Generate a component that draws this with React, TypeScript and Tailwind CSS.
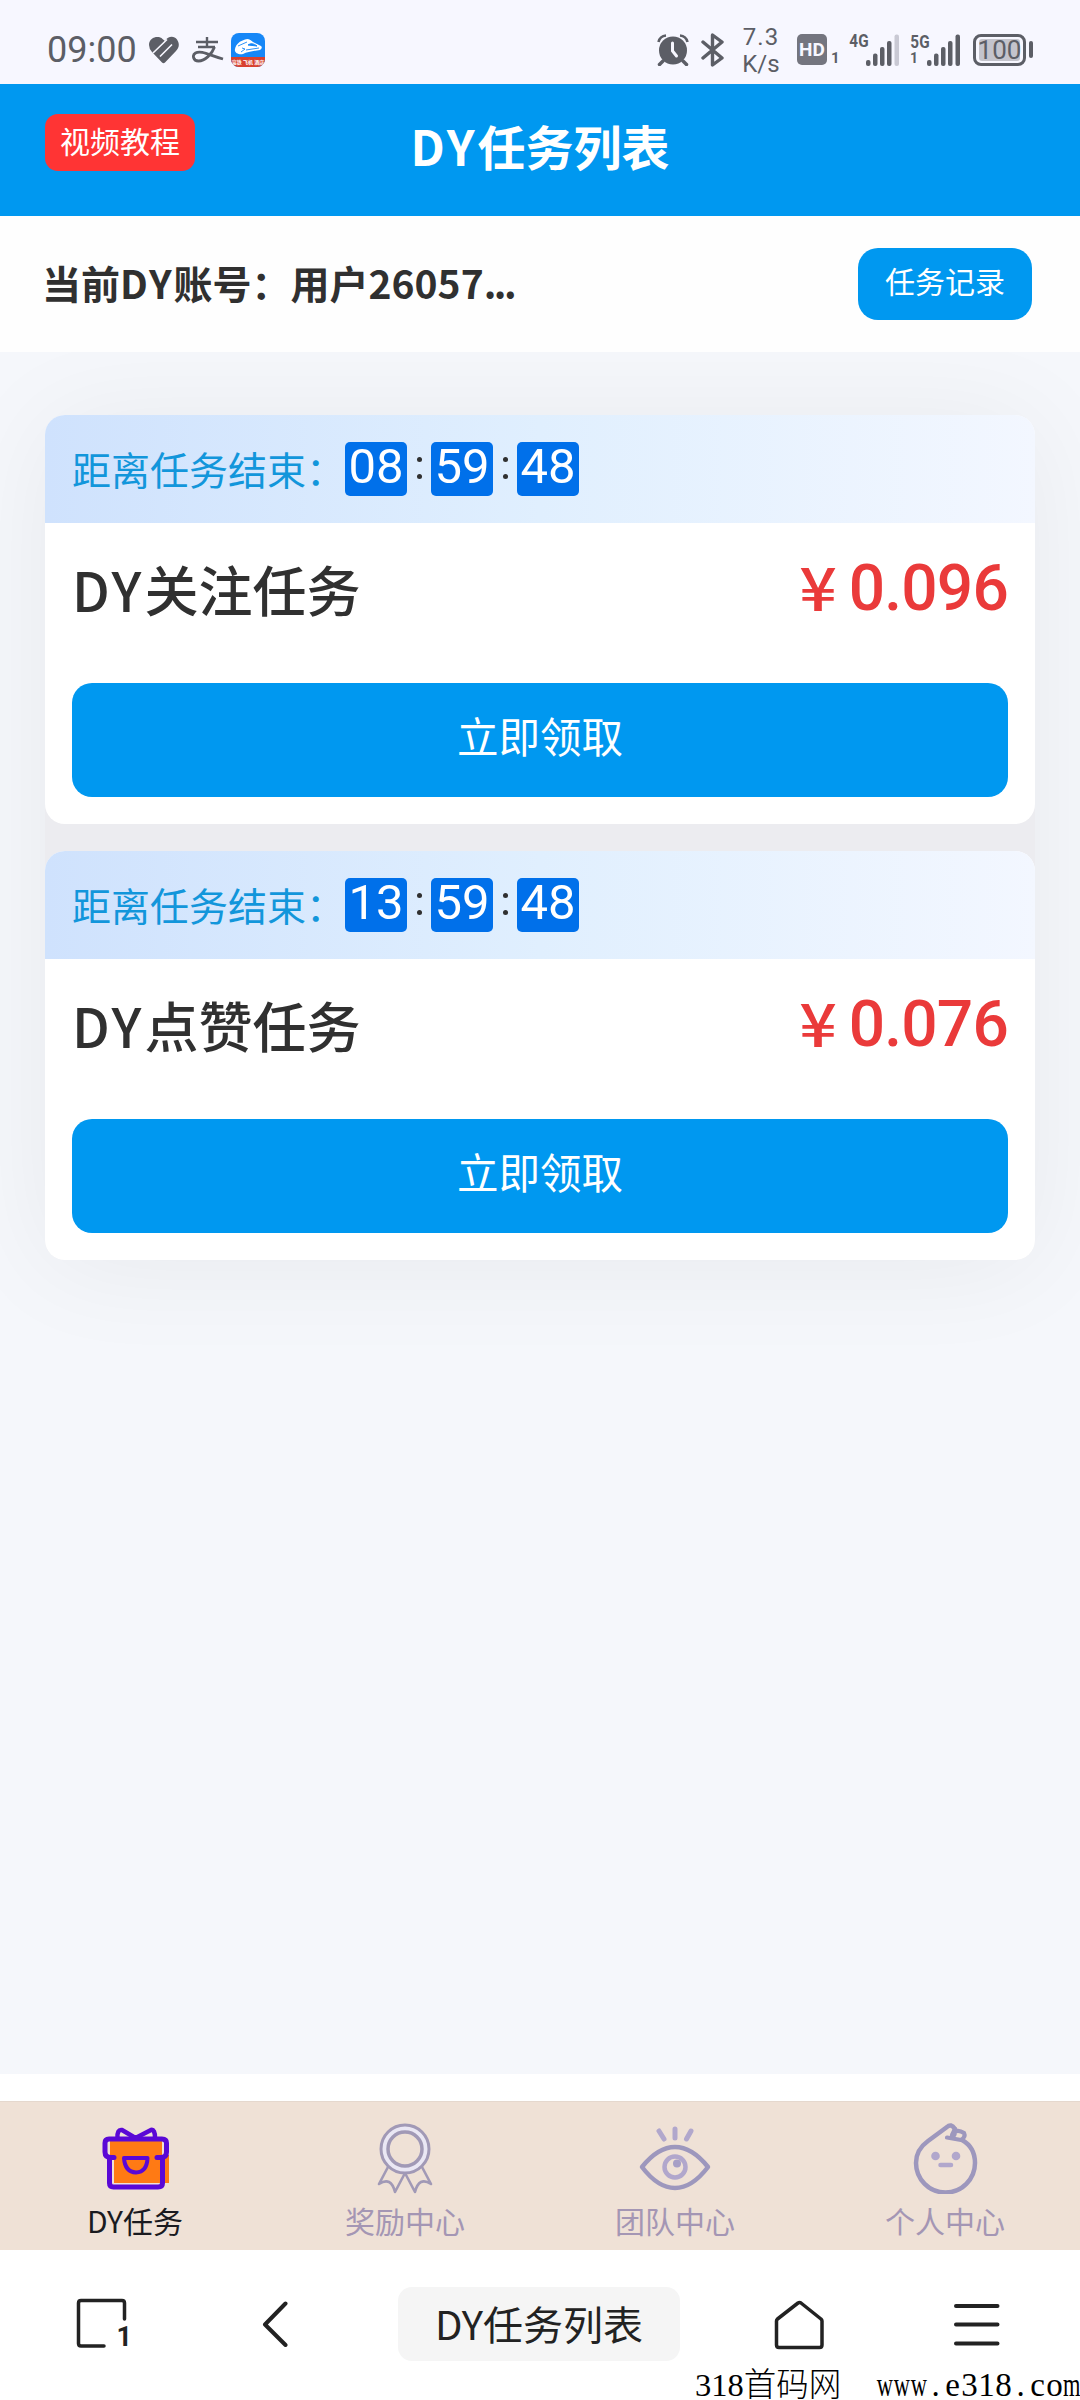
import type { ReactNode } from "react";

type Task = {
  title: string;
  price: string;
  countdown: [string, string, string];
};

const tasks: Task[] = [
  { title: "关注任务", price: "0.096", countdown: ["08", "59", "48"] },
  { title: "点赞任务", price: "0.076", countdown: ["13", "59", "48"] },
];

function HeartIcon() {
  return (
    <svg className="ml-[11px] h-[28px] w-[32px]" viewBox="0 0 32 28" fill="none">
      <path d="M1 9 C1 1 11 -1 14.500 3 L17 5 C20 0 26 -0.500 29 3.500 C32 8 31 12 28 15 L17 26.500 Q15.500 28 14 26.500 L4 16 Q1 12.500 1 9 Z" fill="#5c5e66" />
      <path d="M19 3.500 L5 17 M24 8.500 L12 20.500" stroke="#f7f7ff" strokeWidth="1.600" />
    </svg>
  );
}

function AlipayIcon() {
  return (
    <svg className="ml-[12px] h-[26px] w-[32px]" viewBox="0 0 32 26" fill="none" stroke="#5c5e66" strokeWidth="2.400">
      <path d="M4 5 H26 M15 0 V10 M6 10 H23" />
      <path d="M22.500 10 C20 17 13 24 6.500 24 C1 24 0 18 3.500 16 C9 13 17 18 31 22" strokeWidth="2.800" />
    </svg>
  );
}

function TrainIcon() {
  return (
    <span className="ml-[7px] flex h-[34px] w-[34px] flex-col overflow-hidden rounded-[8px] bg-[#1687f7]">
      <svg className="h-[24px] w-[34px]" viewBox="0 0 34 24" fill="none" stroke="#1687f7">
        <path d="M4 16 C5 11 9 8 14 6.500 C17 5 20 7 22 9 L30 13 Q32 15 29 17 C22 18 16 19 12 21 C8 22 3 20 4 16 Z" fill="#fff" stroke="none" />
        <path d="M17 12 Q21 9 26 13 Z" fill="#1687f7" />
        <path d="M11 15 L14 16 L10 19 M7 13 L16 9 M15 17 L28 15" strokeWidth="0.900" />
      </svg>
      <span className="flex h-[10px] items-center justify-center bg-[#d8412f] text-[5px] leading-none font-bold whitespace-nowrap text-white">
        高铁 飞机 酒店
      </span>
    </span>
  );
}

function AlarmIcon() {
  return (
    <svg className="h-[32px] w-[32px]" viewBox="0 0 32 32" fill="none" stroke="#5c5e66">
      <circle cx="16" cy="16.500" r="14" fill="#5c5e66" stroke="none" />
      <path d="M1.500 8 Q3 2 9 1.500 M23 1.500 Q29 2 30.500 8" strokeWidth="2.600" />
      <path d="M6 27 L2.500 30.500 M26 27 L29.500 30.500" strokeWidth="3.500" strokeLinecap="round" />
      <path d="M15.500 9 V17 L19.500 22" stroke="#f7f7ff" strokeWidth="3" strokeLinecap="round" />
    </svg>
  );
}

function BluetoothIcon() {
  return (
    <svg className="ml-[12px] h-[34px] w-[23px]" viewBox="0 0 23 34" fill="none" stroke="#5c5e66" strokeWidth="3.400" strokeLinejoin="round" strokeLinecap="round">
      <path d="M2 9 L21 25 L11.500 32 V2 L21 9 L2 25" />
    </svg>
  );
}

function SignalBars({ weak }: { weak?: boolean }) {
  return (
    <svg className="h-[32px] w-[34px]" viewBox="0 0 34 32" fill="#5c5e66">
      <rect x="0" y="26" width="4.500" height="6" rx="2" />
      <rect x="7" y="19.500" width="4.500" height="12.500" rx="2" />
      <rect x="14" y="13" width="4.500" height="19" rx="2" />
      <rect x="21" y="7" width="4.500" height="25" rx="2" />
      <rect x="28.500" y="0.500" width="4.500" height="31.500" rx="2" fill={weak ? "#c9c9d4" : "#5c5e66"} />
    </svg>
  );
}

function StatusBar() {
  return (
    <div className="flex h-[84px] items-start bg-[#f7f7ff] font-['Roboto','Noto_Sans_CJK_SC',sans-serif] text-[#5c5e66]">
      <div className="box-content flex h-[34px] w-[657px] shrink-0 items-center pt-[33px]">
        <span className="ml-[47px] w-[90px] text-[36px] leading-[34px]">09:00</span>
        <HeartIcon />
        <AlipayIcon />
        <TrainIcon />
      </div>
      <div className="box-content flex h-[33px] items-center pt-[33px]">
        <AlarmIcon />
        <BluetoothIcon />
        <span className="ml-[17px] flex w-[40px] flex-col items-center pt-[2px] text-[24px] leading-[27px]">
          <span className="tracking-[1px]">7.3</span>
          <span>K/s</span>
        </span>
        <span className="ml-[16px] flex h-[31px] w-[30px] items-center justify-center rounded-[5px] bg-[#74757f] text-[19px] leading-none font-bold text-[#f7f7ff]">
          HD
        </span>
        <span className="mt-[18px] ml-[4px] w-[8px] text-[15px] leading-none font-bold">1</span>
        <span className="mb-[17px] ml-[9px] w-[18px] scale-x-[0.85] text-[18px] leading-none font-bold">4G</span>
        <SignalBars weak />
        <span className="ml-[10px] flex w-[17px] flex-col text-[18px] leading-[17px] font-bold">
          <span className="-ml-[1px] scale-x-[0.85]">5G</span>
          <span className="text-[14px]">1</span>
        </span>
        <SignalBars />
        <span className="ml-[12px] flex h-[32px] w-[53px] items-center justify-center rounded-[8px] border-[3px] border-[#5c5e66]">
          <span className="flex h-[22px] w-[41px] items-center justify-center rounded-[3px] bg-[#c4c4cc] text-[26px] leading-none">
            100
          </span>
        </span>
        <span className="ml-[3px] h-[17px] w-[4px] rounded-[2px] bg-[#5c5e66]" />
      </div>
    </div>
  );
}

function TaskCard({ task }: { task: Task }) {
  const [hours, minutes, seconds] = task.countdown;
  return (
    <section className="h-[409px] overflow-hidden rounded-[20px] bg-white">
      <div className="flex h-[108px] items-center bg-linear-to-r from-[#cfe2fd] via-[#e0effe] to-[#f3f7ff] pl-[27px]">
        <span className="w-[273px] pb-[2px] text-[39px] leading-none text-[#1296db]">距离任务结束：</span>
        <TimeBox value={hours} />
        <Colon />
        <TimeBox value={minutes} />
        <Colon />
        <TimeBox value={seconds} />
      </div>
      <div className="flex h-[160px] items-start justify-between px-[27px] pt-[26px]">
        <h2 className="text-[54px] leading-[80px] font-medium text-[#303030]">
          <span className="tracking-[3px]">DY</span>
          {task.title}
        </h2>
        <div className="flex text-[60px] leading-[72px] font-medium text-[#ea3a3a]">
          <span className="mr-[14px] origin-center scale-x-[1.1]">¥</span>
          <span className="font-['Roboto',sans-serif] text-[64px] leading-[80px] tracking-[-0.800px]">
            {task.price}
          </span>
        </div>
      </div>
      <button
        type="button"
        className="mx-[27px] flex h-[114px] w-[936px] items-center justify-center rounded-[20px] bg-[#0098f0] pb-[9px] text-[41.500px] text-white"
      >
        立即领取
      </button>
    </section>
  );
}

function TimeBox({ value }: { value: string }) {
  return (
    <span className="flex h-[54px] w-[62px] items-center justify-center rounded-[5px] bg-[#0070ea] pb-[5px] font-['Roboto',sans-serif] text-[49px] leading-[49px] text-white">
      {value}
    </span>
  );
}

function Colon() {
  return (
    <span className="flex w-[24px] flex-col items-center gap-[12px] pb-[3px]">
      <span className="h-[5px] w-[5px] rounded-full bg-[#303030]" />
      <span className="h-[5px] w-[5px] rounded-full bg-[#303030]" />
    </span>
  );
}

function GiftIcon() {
  return (
    <svg className="h-[72px] w-[72px]" viewBox="0 0 72 72" fill="none" stroke="#5a08d6" strokeWidth="5" strokeLinecap="round" strokeLinejoin="round">
      <path d="M11 18 H63 V33 H70 V61 H15 V36 H11 Z" fill="#ff7a14" stroke="none" />
      <path d="M36.500 16 L23 8 Q18 7 18.500 16 M36.500 16 L52 8 Q56 7 56 16" strokeWidth="4.500" />
      <path d="M15 35.500 H12 Q6 35.500 6 30 V21 Q6 17 10 17 H63 Q67.500 17 67.500 21 V30 Q67.500 35.500 62 35.500 H58" />
      <path d="M10.500 36 V61 Q10.500 65 14.500 65 H59 Q63.500 65 63.500 61 V36" />
      <path d="M25 36 H48.500 Q48 50 37 50.500 Q26 50 25 36 Z" strokeWidth="4" />
    </svg>
  );
}

function MedalIcon() {
  return (
    <svg className="h-[72px] w-[72px]" viewBox="0 0 72 72" fill="none" stroke="#a199b6" strokeWidth="2.600" strokeLinejoin="round">
      <circle cx="36" cy="27" r="20.500" stroke="#eae7f4" strokeWidth="6" />
      <circle cx="36" cy="27" r="24" strokeWidth="3" />
      <circle cx="36" cy="27" r="17" strokeWidth="3.500" />
      <path d="M19 45 L10 62 Q22 54 26 70 L35.500 52" />
      <path d="M53 45 L62 62 Q50 54 46 70 L36.500 52" />
    </svg>
  );
}

function EyeIcon() {
  return (
    <svg className="h-[72px] w-[72px]" viewBox="0 0 72 72" fill="none" stroke="#9d97bd" strokeWidth="4.500" strokeLinecap="round" strokeLinejoin="round">
      <path d="M3 45 Q19 25 36 25 Q53 25 69 45 Q53 66 36 66 Q19 66 3 45 Z" />
      <circle cx="36" cy="45" r="10.500" stroke="#b1a7cc" />
      <circle cx="38" cy="41.500" r="4" fill="#a79fc6" stroke="none" />
      <path d="M20 9 L25 17 M36 7 V16 M52 9 L47.500 17" stroke="#b1a7cc" strokeWidth="5" />
    </svg>
  );
}

function BabyIcon() {
  return (
    <svg className="h-[72px] w-[72px]" viewBox="0 0 72 72" fill="none" stroke="#9d97bd" strokeWidth="4.500" strokeLinecap="round" strokeLinejoin="round">
      <path d="M53 18 C62 23 66 32 66 41 A29.500 29.500 0 0 1 7 41 C7 31 12 24 19 19 L38 5 Q42 1 46 7" />
      <path d="M46 7 L43 13 M38 15.500 L52 18 Q57 15 55 11 Q50 7.500 46 9.500 Q46 14 43 15" strokeWidth="4.200" />
      <circle cx="26.500" cy="34" r="4.300" fill="#b1a7cc" stroke="none" />
      <circle cx="47" cy="34" r="4.300" fill="#b1a7cc" stroke="none" />
      <path d="M31.500 43 H42" stroke="#b1a7cc" />
    </svg>
  );
}

function TabItem({ icon, label, active }: { icon: ReactNode; label: string; active?: boolean }) {
  return (
    <button type="button" className="flex flex-1 flex-col items-center pt-[20px]">
      {icon}
      <span
        className={`mt-[4px] text-[30px] leading-[44px] ${active ? "text-[#1a1a1f]" : "text-[#a496b4]"}`}
      >
        {label}
      </span>
    </button>
  );
}

function BrowserBar() {
  return (
    <div className="flex h-[150px] items-start bg-white text-[#222]">
      <svg className="mt-[48px] ml-[76px] h-[54px] w-[56px]" viewBox="0 0 56 54" fill="none" stroke="#222" strokeWidth="3.500" strokeLinecap="round">
        <path d="M28 48 H5 Q2.500 48 2.500 45.500 V5 Q2.500 2.500 5 2.500 H46 Q48.500 2.500 48.500 5 V21" />
        <text x="40.500" y="48" fill="#222" stroke="none" fontSize="27" fontWeight="700" fontFamily="Roboto, sans-serif">
          1
        </text>
      </svg>
      <svg className="mt-[51px] ml-[129px] h-[46px] w-[28px]" viewBox="0 0 28 46" fill="none" stroke="#222" strokeWidth="4" strokeLinecap="round" strokeLinejoin="round">
        <path d="M24.500 2.500 L4 23.500 L24.500 44" />
      </svg>
      <div className="mt-[37px] ml-[109px] flex h-[74px] w-[282px] items-center justify-center rounded-[14px] bg-[#f5f5f5] pb-[2px] text-[40px] leading-none">
        DY任务列表
      </div>
      <svg className="mt-[50px] ml-[94px] h-[50px] w-[52px]" viewBox="0 0 52 50" fill="none" stroke="#222" strokeWidth="3.500" strokeLinejoin="round">
        <path d="M24 3 Q25.500 2 27 3 L47 19 Q48 20 48 21 V45 Q48 47.500 45.500 47.500 H5 Q2.500 47.500 2.500 45 V21 Q2.500 20 3.500 19 Z" />
      </svg>
      <svg className="mt-[53px] ml-[128px] h-[44px] w-[46px]" viewBox="0 0 46 44" stroke="#222" strokeWidth="4" strokeLinecap="round">
        <path d="M2 3 H43.500 M2 21.500 H43.500 M2 40.500 H43.500" />
      </svg>
    </div>
  );
}

// fixed-pitch serif lettering: wide latin glyphs are squeezed into a half-width cell
function SiteMark() {
  return (
    <div className="absolute right-0 bottom-0 flex h-[30px] w-[385px] items-center font-['Liberation_Serif','Noto_Sans_CJK_SC',serif] text-[33px] leading-none text-black">
      <span className="w-[181px] text-[32.500px] font-light whitespace-nowrap">318首码网</span>
      {"www.e318.com".split("").map((char, index) => (
        <span key={index} className="flex w-[17px] justify-center">
          <span className={char === "w" || char === "m" ? "scale-x-[0.68]" : ""}>{char}</span>
        </span>
      ))}
    </div>
  );
}

export default function App() {
  return (
    <div className="relative flex h-[2400px] w-[1080px] flex-col overflow-hidden bg-[#f5f7fb] font-['Noto_Sans_CJK_SC',sans-serif]">
      <StatusBar />

      <header className="grid h-[132px] grid-cols-[1fr_auto_1fr] items-start bg-[#0098f0] pt-[30px] text-white">
        <button
          type="button"
          className="ml-[45px] flex h-[57px] w-[150px] items-center justify-center rounded-[13px] bg-[#ff3434] pb-[4px] text-[30px]"
        >
          视频教程
        </button>
        <h1 className="text-[48px] leading-[62px] font-bold">
          <span className="tracking-[3px]">DY</span>任务列表
        </h1>
      </header>

      <div className="flex h-[136px] items-start justify-between bg-[#fefefe] pr-[48px] pl-[42px]">
        <span className="mt-[38px] text-[39px] leading-[56px] font-bold text-[#303030]">
          当前<span className="tracking-[2px]">DY</span>账号：用户26057
          <span className="tracking-[-2.500px]">...</span>
        </span>
        <button
          type="button"
          className="mt-[32px] flex h-[72px] w-[174px] items-center justify-center rounded-[20px] bg-[#0098f0] pb-[8px] text-[30px] text-white"
        >
          任务记录
        </button>
      </div>

      <main className="h-[1722px] overflow-hidden px-[45px] pt-[63px]">
        <div className="flex flex-col gap-[27px] rounded-[20px] bg-[#ececf0] shadow-[0_6px_110px_rgba(0,0,0,0.06)]">
          {tasks.map((task) => (
            <TaskCard key={task.title} task={task} />
          ))}
        </div>
      </main>

      <div className="h-[27px] bg-white" />
      <nav className="flex h-[149px] border-t border-[#e5d8ce] bg-[#efe1d6]">
        <TabItem icon={<GiftIcon />} label="DY任务" active />
        <TabItem icon={<MedalIcon />} label="奖励中心" />
        <TabItem icon={<EyeIcon />} label="团队中心" />
        <TabItem icon={<BabyIcon />} label="个人中心" />
      </nav>

      <BrowserBar />
      <SiteMark />
    </div>
  );
}
